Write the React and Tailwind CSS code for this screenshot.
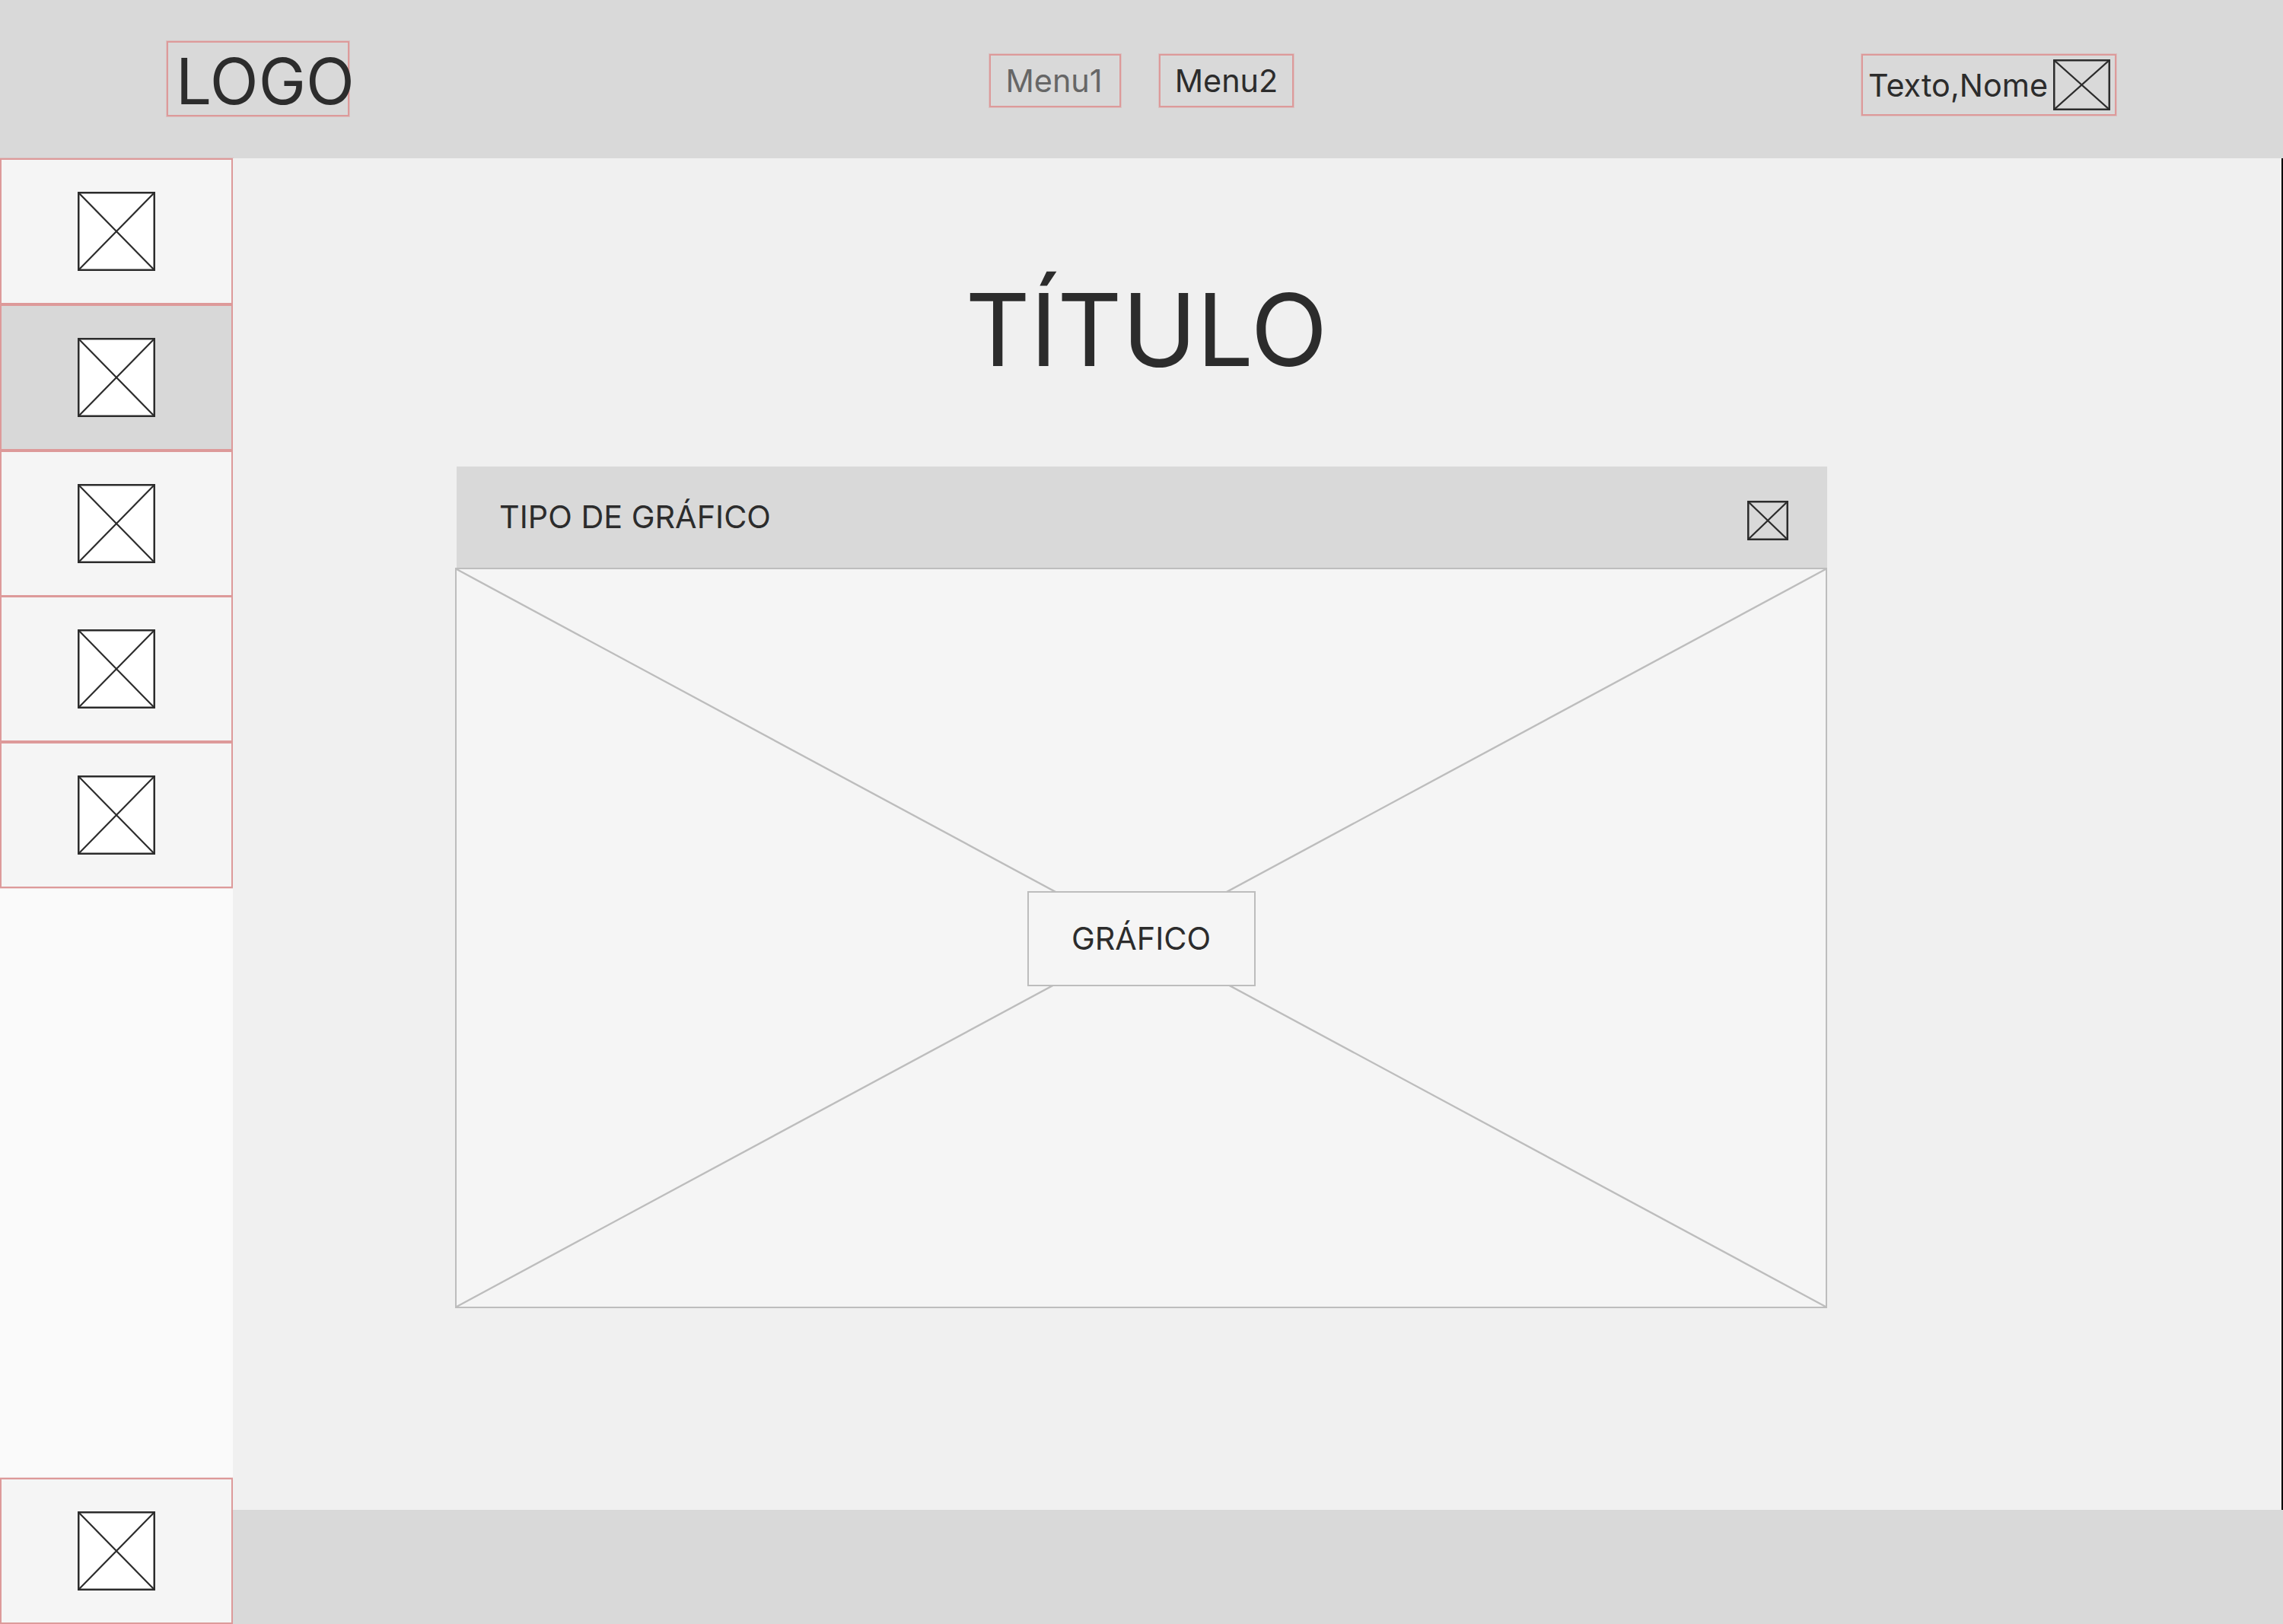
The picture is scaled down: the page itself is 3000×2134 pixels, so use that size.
import React from 'react';

const inter = '[font-family:Inter,"Liberation_Sans",sans-serif]';

// placeholder image: a box with a cross through it
const Placeholder = ({ className }) => (
  <svg className={className} viewBox="0 0 100 100" preserveAspectRatio="none">
    <rect x="0" y="0" width="100" height="100" fill="none" stroke="#2c2c2c" strokeWidth="5" vectorEffect="non-scaling-stroke" />
    <path d="M0 0L100 100M100 0L0 100" fill="none" stroke="#2c2c2c" strokeWidth="2.2" vectorEffect="non-scaling-stroke" />
  </svg>
);

const SideItem = ({ active, className = '' }) => (
  <div className={`flex h-[192px] items-center justify-center border-2 border-[#dd9a9a] shadow-[0_0_0_1px_#dd9a9a55] ${active ? 'bg-[#d8d8d8]' : 'bg-[#f5f5f5]'} ${className}`}>
    <Placeholder className="h-[104px] w-[102px] bg-white" />
  </div>
);

export default function App() {
  return (
    <div className={`flex h-[2134px] w-[3000px] flex-col overflow-hidden bg-[#f0f0f0] text-[#2c2c2c] ${inter}`}>
      <header className="flex h-[208px] shrink-0 items-start bg-[#d9d9d9]">
        <div className="ml-[219px] mt-[54px] flex h-[99px] w-[240px] items-center whitespace-nowrap border-2 border-[#dd9a9a] pl-[10px] pt-[7px] text-[83.5px] leading-none shadow-[0_0_0_1px_#dd9a9a55]">
          LOGO
        </div>
        <div className="ml-[841px] mt-[71px] flex h-[70px] w-[173px] items-center justify-center border-2 border-[#dd9a9a] pr-[3px] pt-[2px] text-[41.33px] text-[#666666] shadow-[0_0_0_1px_#dd9a9a55]">
          Menu1
        </div>
        <div className="ml-[50px] mt-[71px] flex h-[70px] w-[177px] items-center justify-center border-2 border-[#dd9a9a] pt-[2px] text-[41.33px] shadow-[0_0_0_1px_#dd9a9a55]">
          Menu2
        </div>
        <div className="ml-[746px] mt-[71px] flex h-[81px] w-[335px] items-center justify-between border-2 border-[#dd9a9a] pl-[7px] pr-[6px] text-[41.33px] shadow-[0_0_0_1px_#dd9a9a55]">
          <span className="mt-[3px]">Texto,Nome</span>
          <Placeholder className="h-[67px] w-[75px]" />
        </div>
      </header>

      <div className="flex min-h-0 flex-1">
        <aside className="flex w-[306px] shrink-0 flex-col justify-between bg-[#fafafa]">
          <div className="flex flex-col">
            <SideItem />
            <SideItem active />
            <SideItem />
            <SideItem className="-mt-px" />
            <SideItem />
          </div>
          <SideItem />
        </aside>

        <div className="flex min-w-0 flex-1 flex-col">
          <main className="flex-1 border-r-2 border-black bg-[#f0f0f0] pl-[292px]">
            <div className="w-[1803px]">
              <h1 className="mt-[139px] pl-[14px] text-center text-[132px] font-normal leading-[172px]">TÍTULO</h1>
              <div className="ml-[2px] mt-[94px] flex h-[133px] items-center justify-between bg-[#d9d9d9] pl-[56px] pr-[51px]">
                <span className="text-[41.33px]">TIPO DE GRÁFICO</span>
                <Placeholder className="mt-[8px] h-[52px] w-[54px]" />
              </div>
              <div className="relative flex h-[973px] items-center justify-center border-2 border-[#bdbdbd] bg-[#f5f5f5]">
                <svg className="absolute inset-0 h-full w-full" viewBox="0 0 100 100" preserveAspectRatio="none">
                  <path d="M0 0L100 100M100 0L0 100" fill="none" stroke="#bdbdbd" strokeWidth="2.4" vectorEffect="non-scaling-stroke" />
                </svg>
                <div className="relative mt-[2px] flex h-[125px] w-[300px] items-center justify-center border-2 border-[#bdbdbd] bg-[#f5f5f5] text-[41.33px]">
                  GRÁFICO
                </div>
              </div>
            </div>
          </main>
          <footer className="h-[150px] shrink-0 bg-[#d9d9d9]" />
        </div>
      </div>
    </div>
  );
}
